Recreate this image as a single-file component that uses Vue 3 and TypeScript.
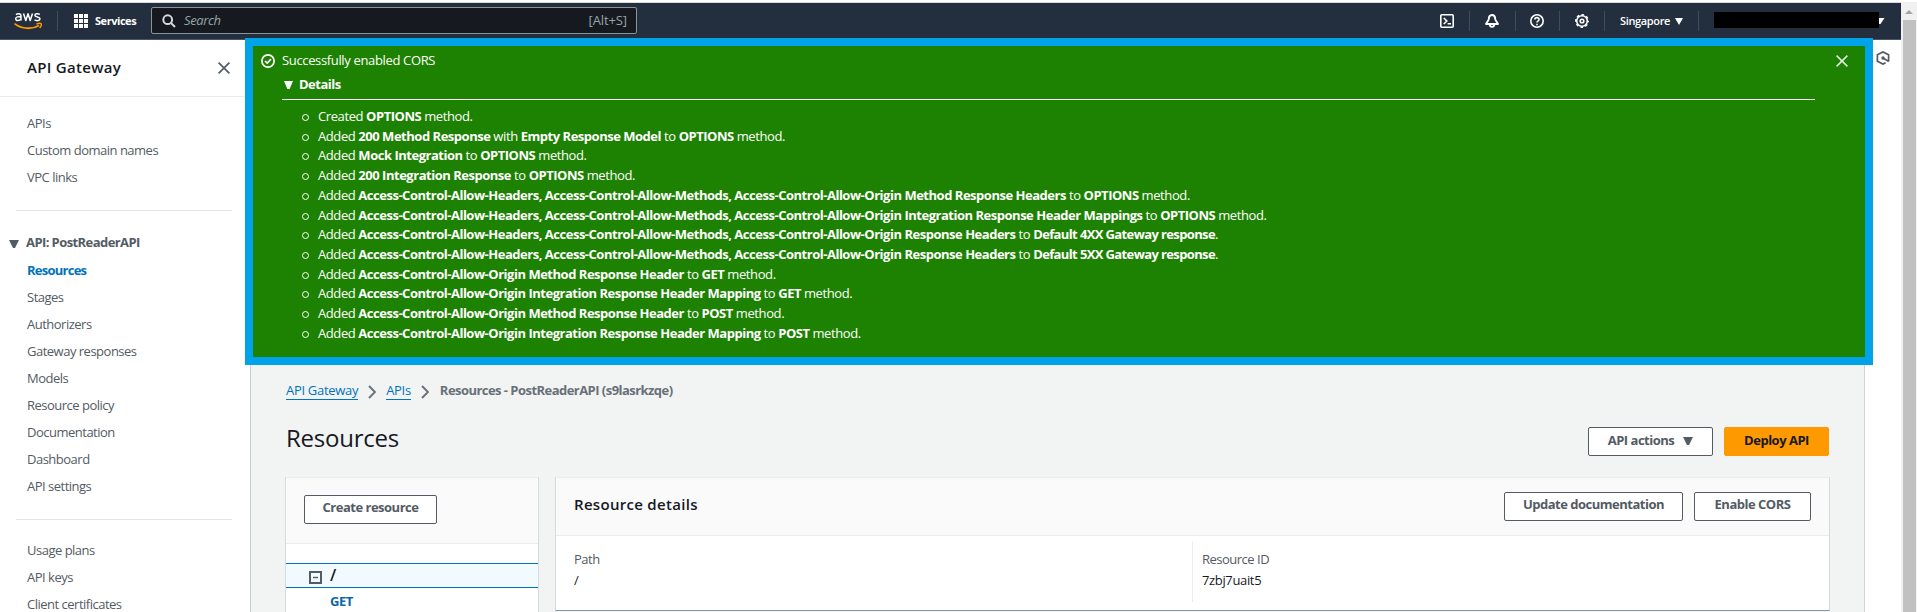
<script setup lang="ts">
interface Part { text: string; bold: boolean; narrow: boolean }
interface NavItem { label: string; active?: boolean }

const parse = (line: string): Part[] =>
  line
    .split('*')
    .map((text, i) => ({ text, bold: i % 2 === 1, narrow: text.startsWith('Default') }))
    .filter((p) => p.text !== '')

const headers = 'Access-Control-Allow-Headers, Access-Control-Allow-Methods, Access-Control-Allow-Origin'
const messages: Part[][] = [
  'Created *OPTIONS* method.',
  'Added *200 Method Response* with *Empty Response Model* to *OPTIONS* method.',
  'Added *Mock Integration* to *OPTIONS* method.',
  'Added *200 Integration Response* to *OPTIONS* method.',
  `Added *${headers} Method Response Headers* to *OPTIONS* method.`,
  `Added *${headers} Integration Response Header Mappings* to *OPTIONS* method.`,
  `Added *${headers} Response Headers* to *Default 4XX Gateway response*.`,
  `Added *${headers} Response Headers* to *Default 5XX Gateway response*.`,
  'Added *Access-Control-Allow-Origin Method Response Header* to *GET* method.',
  'Added *Access-Control-Allow-Origin Integration Response Header Mapping* to *GET* method.',
  'Added *Access-Control-Allow-Origin Method Response Header* to *POST* method.',
  'Added *Access-Control-Allow-Origin Integration Response Header Mapping* to *POST* method.',
].map(parse)

const topLinks: NavItem[] = [{ label: 'APIs' }, { label: 'Custom domain names' }, { label: 'VPC links' }]
const apiLinks: NavItem[] = [
  { label: 'Resources', active: true },
  { label: 'Stages' },
  { label: 'Authorizers' },
  { label: 'Gateway responses' },
  { label: 'Models' },
  { label: 'Resource policy' },
  { label: 'Documentation' },
  { label: 'Dashboard' },
  { label: 'API settings' },
]
const bottomLinks: NavItem[] = [{ label: 'Usage plans' }, { label: 'API keys' }, { label: 'Client certificates' }]
</script>

<template>
  <div class="window">
    <div class="page">
      <header class="topbar">
        <svg class="logo" viewBox="0 0 28 18" width="28" height="18">
          <g fill="none" stroke="#fff" stroke-width="1.5" stroke-linejoin="round">
            <path d="M2 2.6C3.6 1.4 7 1.2 7 3.8V8.6M7 5C4.6 4.4 1.7 4.7 1.7 6.8C1.7 9.1 5.6 9 7 6.8" />
            <path d="M9.5 1.4L11.8 8.5L14 1.8L16.2 8.5L18.5 1.4" />
            <path d="M25.8 2.3C23.8 1.3 20.8 1.6 20.9 3.4C21 5.5 26 4.5 26 6.8C26 9 22.5 9 20.5 7.9" />
          </g>
          <path d="M0.6 11.6C7.8 17.3 18 17.6 25 13.4" fill="none" stroke="#ff9900" stroke-width="1.8" />
          <path d="M22.4 12.1C24.6 11.2 26.6 11.2 27.2 11.8C27.6 12.8 26.9 14.7 25.6 16" fill="none" stroke="#ff9900" stroke-width="1.4" />
        </svg>
        <span class="sep sep-logo"></span>
        <svg class="grid-icon" viewBox="0 0 14 14" width="14" height="14" fill="#fff">
          <path d="M0 0h4v4H0zM5 0h4v4H5zM10 0h4v4h-4zM0 5h4v4H0zM5 5h4v4H5zM10 5h4v4h-4zM0 10h4v4H0zM5 10h4v4H5zM10 10h4v4h-4z" />
        </svg>
        <span class="services">Services</span>
        <div class="search">
          <svg viewBox="0 0 14 14" width="14" height="14" fill="none" stroke="#d5dbdb" stroke-width="2">
            <circle cx="5.7" cy="5.7" r="4.4" /><path d="M8.9 8.9L13 13" />
          </svg>
          <span class="placeholder">Search</span>
          <span class="shortcut">[Alt+S]</span>
        </div>
        <div class="tools">
          <span class="tool t1">
            <svg viewBox="0 0 14 14" width="14" height="14" fill="none" stroke="#fff" stroke-width="1.6">
              <rect x="0.8" y="0.8" width="12.4" height="12.4" rx="1" /><path d="M3.8 4L6.8 7L3.8 10M7.6 9.8H11" />
            </svg>
          </span>
          <span class="tool t2">
            <svg viewBox="0 0 14 14" width="14" height="14" fill="none" stroke="#fff" stroke-width="1.9" stroke-linejoin="round">
              <path d="M7 1C4.6 1 3.9 2.8 3.9 4.6C3.9 7 1.2 8.2 1 10H13C12.8 8.2 10.1 7 10.1 4.6C10.1 2.8 9.4 1 7 1ZM4.8 10.3C4.8 13.7 9.2 13.7 9.2 10.3" />
            </svg>
          </span>
          <span class="tool t3">
            <svg viewBox="0 0 14 14" width="14" height="14" fill="none" stroke="#fff" stroke-width="1.6">
              <circle cx="7" cy="7" r="6.2" /><path d="M4.9 5.6C4.9 2.9 9.2 3 9.1 5.5C9 6.9 7 6.8 7 8.6M7 9.7V11.2" />
            </svg>
          </span>
          <span class="tool t4">
            <svg viewBox="0 0 14 14" width="14" height="14" fill="none" stroke="#fff">
              <circle cx="7" cy="7" r="5.3" stroke-width="1.6" />
              <circle cx="7" cy="7" r="6.3" stroke-width="1.4" stroke-dasharray="2.6 2.348" stroke-dashoffset="1.3" />
              <circle cx="7" cy="7" r="1.8" stroke-width="1.6" />
            </svg>
          </span>
          <span class="region">Singapore</span>
          <svg class="region-caret" viewBox="0 0 8 7" width="8" height="7" fill="#fff"><path d="M0 0H8L4 7z" /></svg>
          <span class="sep sep-account"></span>
          <span class="account"></span>
          <svg class="account-caret" viewBox="0 0 6 6" width="6" height="6" fill="#fff"><path d="M0 0H5.5L1.5 6H0z" /></svg>
        </div>
      </header>

      <div class="body">
        <aside class="sidebar">
          <div class="side-head">
            <span class="side-title">API Gateway</span>
            <svg viewBox="0 0 12 12" width="12" height="12" fill="none" stroke="#545b64" stroke-width="1.7"><path d="M0.6 0.6L11.4 11.4M11.4 0.6L0.6 11.4" /></svg>
          </div>
          <nav class="group first">
            <a v-for="l in topLinks" :key="l.label" class="link">{{ l.label }}</a>
          </nav>
          <hr class="rule">
          <div class="section">
            <svg viewBox="0 0 10 8" width="10" height="8" fill="#545b64"><path d="M0 0H10L6 8H4z" /></svg>
            <span>API: PostReaderAPI</span>
          </div>
          <nav class="group">
            <a v-for="l in apiLinks" :key="l.label" class="link" :class="{ active: l.active }">{{ l.label }}</a>
          </nav>
          <hr class="rule second">
          <nav class="group last">
            <a v-for="l in bottomLinks" :key="l.label" class="link">{{ l.label }}</a>
          </nav>
        </aside>

        <main class="content">
          <div class="crumbs">
            <a class="crumb">API Gateway</a>
            <svg viewBox="0 0 8 14" width="8" height="14" fill="none" stroke="#687078" stroke-width="1.9"><path d="M1 1L7 7L1 13" /></svg>
            <a class="crumb">APIs</a>
            <svg viewBox="0 0 8 14" width="8" height="14" fill="none" stroke="#687078" stroke-width="1.9"><path d="M1 1L7 7L1 13" /></svg>
            <span class="here">Resources - PostReaderAPI (s9lasrkzqe)</span>
          </div>
          <div class="heading">
            <h1>Resources</h1>
            <button class="btn actions">
              API actions
              <svg viewBox="0 0 10 8" width="10" height="8" fill="#545b64"><path d="M0 0H10L6 8H4z" /></svg>
            </button>
            <button class="btn primary">Deploy API</button>
          </div>
          <div class="panels">
            <section class="panel tree">
              <div class="tree-head"><button class="btn create">Create resource</button></div>
              <div class="root">
                <svg viewBox="0 0 13 13" width="13" height="13" fill="none" stroke="#545b64" stroke-width="2"><rect x="1" y="1" width="11" height="11" /><path d="M4 6.5H9" stroke-width="1.4" /></svg>
                <span>/</span>
              </div>
              <div class="method">GET</div>
            </section>
            <section class="panel details">
              <div class="details-head">
                <h2>Resource details</h2>
                <button class="btn update">Update documentation</button>
                <button class="btn cors">Enable CORS</button>
              </div>
              <div class="fields">
                <div class="field"><span class="key">Path</span><span class="value">/</span></div>
                <div class="field right"><span class="key">Resource ID</span><span class="value">7zbj7uait5</span></div>
              </div>
            </section>
          </div>
        </main>

        <aside class="rail">
          <svg viewBox="0 0 14 14" width="14" height="14" fill="none" stroke="#545b64" stroke-width="1.7">
            <path d="M9.6 11.8L7 13.1L1.4 10.2V3.8L7 0.9L12.6 3.8V10.2" /><circle cx="7" cy="7" r="1.7" fill="#545b64" stroke="none" /><path d="M7 7L12.8 10.4" />
          </svg>
        </aside>
      </div>
    </div>

    <div class="scrollbar">
      <svg viewBox="0 0 8 4" width="8" height="4" fill="#a3a3a3"><path d="M0 4L4 0L8 4z" /></svg>
      <div class="thumb"></div>
    </div>

    <div class="flash">
      <svg class="check" viewBox="0 0 14 14" width="14" height="14" fill="none" stroke="#fff" stroke-width="1.7"><circle cx="7" cy="7" r="6.1" /><path d="M4 7L6.2 9.1L10 5.2" /></svg>
      <div class="flash-body">
        <div class="flash-title">Successfully enabled CORS</div>
        <div class="flash-sub">
          <svg viewBox="0 0 9 8" width="9" height="8" fill="#fff"><path d="M0 0H9L5.6 8H3.4z" /></svg>
          <span>Details</span>
        </div>
        <ul>
          <li v-for="(m, i) in messages" :key="i"><span v-for="(p, j) in m" :key="j" :class="{ strong: p.bold, narrow: p.narrow }">{{ p.text }}</span></li>
        </ul>
      </div>
      <svg class="dismiss" viewBox="0 0 12 12" width="12" height="12" fill="none" stroke="#e4f0e0" stroke-width="1.5"><path d="M0.6 0.6L11.4 11.4M11.4 0.6L0.6 11.4" /></svg>
    </div>
  </div>
</template>

<style scoped>
.window {
  position: relative;
  display: flex;
  width: 1917px;
  height: 612px;
  overflow: hidden;
  background: #fff;
  padding-top: 2px;
  box-sizing: border-box;
  font: 13px/20px "Open Sans", "Noto Sans", sans-serif;
  letter-spacing: -0.5px;
  color: #16191f;
}
.window * { box-sizing: border-box; }
svg { display: block; flex: none; }
.page { width: 1901px; display: flex; flex-direction: column; border-top: 1px solid #dcdcdc; }

.topbar {
  display: flex;
  align-items: center;
  height: 37px;
  flex: none;
  padding: 0 0 1px 14px;
  background: #232f3e;
  border-bottom: 1px solid #4b5563;
  color: #fff;
  white-space: nowrap;
}
.sep { width: 1px; height: 20px; background: #414d5c; flex: none; }
.sep-logo { margin: 0 16px 0 15px; }
.services { width: 56px; margin-left: 7px; font-size: 11px; font-weight: 700; letter-spacing: -0.45px; }
.search {
  display: flex;
  align-items: center;
  width: 486px;
  height: 27px;
  padding: 0 9px 0 10px;
  border: 1px solid #879596;
  border-radius: 2px;
  background: #161a20;
  color: #95a5a6;
}
.placeholder { margin-left: 8px; padding-bottom: 2px; font-style: italic; flex: 1; letter-spacing: -0.4px; }
.shortcut { padding-bottom: 2px; letter-spacing: -0.1px; }
.tools { display: flex; align-items: center; margin-left: auto; }
.tool { display: flex; align-items: center; height: 20px; border-right: 1px solid #414d5c; }
.t1 { width: 30px; }
.t2 { width: 46px; padding-left: 15px; }
.t3 { width: 44px; padding-left: 14px; }
.t4 { width: 45px; padding-left: 15px; }
.region { width: 51px; margin-left: 15px; font-size: 11px; font-weight: 600; letter-spacing: -0.35px; }
.region-caret { margin-left: 4px; position: relative; top: 1px; }
.sep-account { margin-left: 15px; }
.account { width: 165px; height: 16px; margin-left: 15px; background: #000; position: relative; top: -1px; }
.account-caret { margin-right: 16px; }

.body { display: flex; flex: 1; }
.sidebar { width: 251px; border-right: 1px solid #c8cccc; background: #fff; color: #545b64; }
.side-head {
  display: flex;
  align-items: center;
  justify-content: space-between;
  height: 57px;
  padding: 0 20px 1px 27px;
  border-bottom: 1px solid #eaeded;
  color: #16191f;
}
.side-title { padding-bottom: 1px; font-size: 15px; font-weight: 600; letter-spacing: 0.3px; }
.group { display: flex; flex-direction: column; }
.first { padding-top: 13px; }
.last { padding-top: 17px; }
.link { display: block; height: 27px; line-height: 27px; padding-left: 27px; }
.link.active { color: #0073bb; font-weight: 700; letter-spacing: -0.75px; }
.rule { height: 1px; margin: 19px 18px 0 16px; border: 0; background: #e3e5e5; }
.second { margin-top: 19px; }
.section { display: flex; align-items: center; gap: 7px; height: 29px; margin-top: 17px; padding: 0 0 2px 9px; font-weight: 700; letter-spacing: -0.58px; }
.section svg { position: relative; top: 2px; }

.content { width: 1614px; padding: 338px 35px 0 34px; background: #f2f3f3; border-right: 1px solid #d0d4d4; }
.crumbs { display: flex; align-items: center; height: 24px; padding-left: 1px; white-space: nowrap; color: #687078; }
.crumb { line-height: 18px; color: #0073bb; border-bottom: 1px solid #0073bb; letter-spacing: -0.3px; }
.crumbs svg { margin: 3px 10px 0; }
.here { margin-left: 1px; font-weight: 700; letter-spacing: -0.54px; }
.heading { display: flex; height: 29px; margin-top: 25px; padding-left: 1px; }
h1 { flex: 1; margin: 0; font-size: 24px; line-height: 22px; font-weight: 400; letter-spacing: -0.25px; }
.btn {
  height: 29px;
  padding: 0 0 4px;
  border: 1px solid #545b64;
  border-radius: 2px;
  background: #fff;
  color: #545b64;
  font: 700 13px/20px "Open Sans", "Noto Sans", sans-serif;
  letter-spacing: -0.5px;
  white-space: nowrap;
}
.actions { display: flex; align-items: center; justify-content: center; gap: 9px; width: 125px; padding-bottom: 3px; margin-right: 11px; }
.actions svg { position: relative; top: 1px; }
.primary { width: 105px; padding-bottom: 3px; border-color: #ff9900; background: #ff9900; color: #16191f; }
.panels { display: flex; gap: 16px; align-items: flex-start; margin-top: 21px; }
.panel { border: 1px solid #d5dbdb; border-top-color: #eaeded; background: #fff; flex: none; }
.tree { width: 254px; height: 180px; border-bottom: 0; }
.tree-head { height: 66px; padding: 17px 18px; border-bottom: 1px solid #eaeded; background: #fafafa; }
.create { width: 133px; padding-bottom: 5px; }
.root { display: flex; gap: 8px; height: 25px; margin-top: 19px; padding: 7px 0 0 23px; border: solid #0073bb; border-width: 1px 0; background: #f1faff; font-size: 16px; }
.root span { position: relative; top: -6px; line-height: 20px; font-weight: 600; }
.method { padding: 3px 0 0 44px; line-height: 21px; font-weight: 700; color: #0a66ad; }
.details { width: 1275px; height: 134px; border-bottom-color: #879596; }
.details-head { display: flex; height: 58px; padding: 14px 18px 0 18px; border-bottom: 1px solid #eaeded; background: #fafafa; }
.details-head .btn { padding-bottom: 5px; }
h2 { flex: 1; margin: 0; font-size: 15px; line-height: 24px; font-weight: 600; letter-spacing: 0.3px; }
.update { width: 179px; margin-right: 11px; }
.cors { width: 117px; }
.fields { display: flex; padding-top: 5px; }
.field { display: flex; flex-direction: column; width: 636px; height: 61px; padding: 8px 0 0 18px; line-height: 21px; letter-spacing: -0.5px; }
.right { padding-left: 9px; border-left: 1px solid #eaeded; }
.key { height: 21px; color: #545b64; }
.value { letter-spacing: -0.35px; }

.rail { flex: 1; padding: 11px 0 0 11px; background: #fff; }
.scrollbar { width: 16px; padding: 8px 0 0 2px; background: #f1f1f1; }
.scrollbar svg { margin-left: 2px; }
.thumb { width: 13px; height: 600px; margin-top: 6px; background: #c1c1c1; }

.flash {
  position: absolute;
  left: 245px;
  top: 38px;
  display: flex;
  width: 1628px;
  height: 327px;
  border: 8px solid #00a2e8;
  background: #1d8102;
  color: #fff;
  white-space: nowrap;
}
.check { margin: 8px 7px 0 8px; }
.flash-body { width: 1533px; padding-top: 4px; }
.flash-title { height: 22px; line-height: 20px; letter-spacing: -0.35px; }
.flash-sub { display: flex; align-items: center; gap: 6px; height: 28px; padding: 0 0 3px 2px; border-bottom: 1px solid #fff; font-weight: 700; }
.flash-sub svg { position: relative; top: 1px; }
ul { margin: 0; padding: 6px 0 0 36px; list-style: none; letter-spacing: -0.4px; }
li { position: relative; height: 19.73px; line-height: 20px; white-space: pre; }
li::before { content: ""; position: absolute; left: -16px; top: 8px; width: 5px; height: 5px; border: 1px solid #fff; border-radius: 50%; }
.strong { font-weight: 700; letter-spacing: -0.48px; }
.narrow { letter-spacing: -0.62px; }
.dismiss { margin: 9px 0 0 21px; }
</style>
